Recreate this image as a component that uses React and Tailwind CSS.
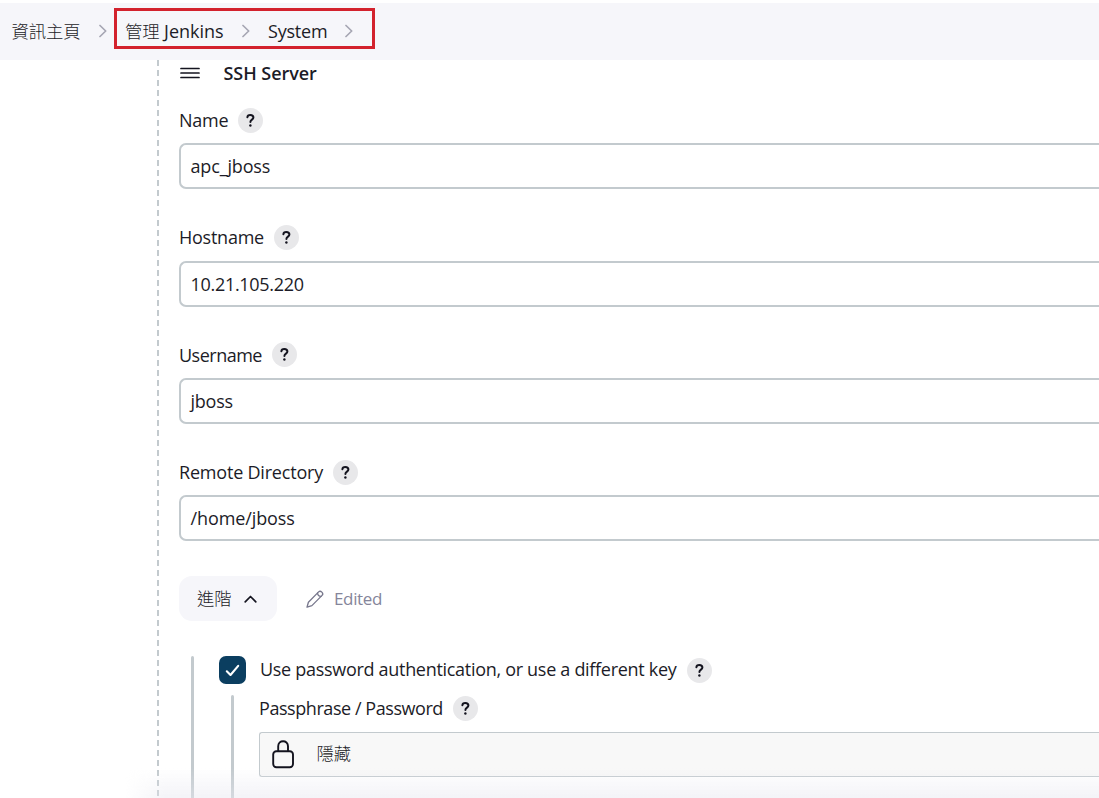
import React from "react";

function Help() {
  return (
    <span className="flex h-[25px] w-[25px] shrink-0 items-center justify-center rounded-full bg-[#e8e8ea]">
      <svg width="9" height="13" viewBox="0 0 9 13" fill="none" stroke="#14141f" strokeWidth="2" strokeLinecap="round" strokeLinejoin="round">
        <path d="M1.4 3.3C1.5 1.8 2.8 1.1 4.3 1.1C6 1.1 7.4 2 7.4 3.6C7.4 5.6 4.4 5.7 4.4 8" />
        <path d="M4.4 11.4V11.5" strokeWidth="2.4" />
      </svg>
    </span>
  );
}

function Separator({ className }) {
  return (
    <svg className={className} width="8" height="14" viewBox="0 0 8 14" fill="none" stroke="#a6a6b3" strokeWidth="1.7" strokeLinecap="round" strokeLinejoin="round">
      <path d="M1 1.5L6.7 7L1 12.5" />
    </svg>
  );
}

function Field({ label, labelClass, value, valueClass, className }) {
  return (
    <div className={`flex flex-col ${className}`}>
      <div className="flex h-[25px] items-center">
        <span className={`shrink-0 whitespace-nowrap ${labelClass}`}>{label}</span>
        <Help />
      </div>
      <div className="flex h-[46px] items-center rounded-l-[7px] border-2 border-r-0 border-[#c3cace] bg-white pl-[9.5px]">
        <span className={`whitespace-nowrap ${valueClass}`}>{value}</span>
      </div>
    </div>
  );
}

export default function App() {
  return (
    <div className="relative flex h-[798px] w-[1099px] flex-col overflow-hidden bg-white pt-[3px] font-['Open_Sans','Noto_Sans_CJK_TC',sans-serif] text-[18px] leading-[25px] text-[#1c1c27]">
      <header className="flex h-[57px] shrink-0 items-start bg-[#f6f6fa] pl-[11.5px]">
        <div className="flex h-[56px] items-center">
          <span className="w-[87.5px] text-[17.3px] font-light">資訊主頁</span>
          <Separator />
        </div>
        <div className="ml-[7px] mt-[5px] flex h-[41px] w-[261px] items-center border-[3px] border-[#d3222d] pl-[8px] pt-[5px]">
          <span className="w-[117px] whitespace-nowrap text-[17.3px] font-light">
            管理 <span className="text-[18px] font-normal tracking-[0px]">Jenkins</span>
          </span>
          <Separator />
          <span className="ml-[18px] w-[77px] tracking-[-0.2px]">System</span>
          <Separator />
        </div>
      </header>
      <main className="flex min-h-0 flex-1 pl-[157px]">
        <div className="w-[2px] shrink-0 bg-[repeating-linear-gradient(to_bottom,#c3cace_0px,#c3cace_6px,transparent_6px,transparent_10px)]" />
        <div className="flex flex-1 flex-col pl-[20px]">
          <div className="flex h-[26px] shrink-0 items-center">
            <svg width="22" height="14" viewBox="0 0 22 14" stroke="#14141f" strokeWidth="1.7" strokeLinecap="round">
              <path d="M2 2.5H20M2 7H20M2 11.5H20" />
            </svg>
            <span className="ml-[22.5px] font-semibold tracking-[-0.05px]">SSH Server</span>
          </div>
          <Field className="mt-[22px] gap-[10px]" label="Name" labelClass="w-[59px] tracking-[-0.25px]" value="apc_jboss" valueClass="tracking-[-0.15px]" />
          <Field className="mt-[36px] gap-[11px]" label="Hostname" labelClass="w-[95px] tracking-[-0.25px]" value="10.21.105.220" valueClass="tracking-[-0.3px]" />
          <Field className="mt-[35px] gap-[11px]" label="Username" labelClass="w-[93px] pt-px tracking-[-0.5px]" value="jboss" valueClass="tracking-[-0.25px]" />
          <Field className="mt-[36px] gap-[10px]" label="Remote Directory" labelClass="w-[154px] tracking-[-0.2px]" value="/home/jboss" valueClass="tracking-[-0.1px]" />
          <div className="mt-[35px] flex h-[45px] shrink-0 items-center">
            <button className="flex h-[45px] w-[98px] items-center rounded-[13px] bg-[#f6f6fa] pl-[18px]">
              <span className="w-[47px] text-left text-[17.3px] font-light">進階</span>
              <svg width="13" height="8" viewBox="0 0 13 8" fill="none" stroke="#14141f" strokeWidth="1.7" strokeLinecap="round" strokeLinejoin="round">
                <path d="M1.2 6.8L6.5 1.5L11.8 6.8" />
              </svg>
            </button>
            <svg className="ml-[28px]" width="20" height="20" viewBox="0 0 20 20" fill="none" stroke="#77778c" strokeWidth="1.3" strokeLinejoin="round" strokeLinecap="round">
              <path d="M2 18.2L3.4 13.3L13.6 2.9C15.6 0.9 19.1 4.4 17.1 6.4L6.9 16.6Z" />
              <path d="M12.6 3.9C12.4 5.9 14.1 7.6 16.1 7.4" />
            </svg>
            <span className="ml-[9px] text-[17px] tracking-[-0.35px] text-[#85859a]">Edited</span>
          </div>
          <div className="mt-[35px] flex min-h-0 flex-1 pl-[12px]">
            <div className="w-[3px] shrink-0 rounded-t-full bg-[#c3cace]" />
            <div className="flex flex-1 flex-col pl-[25px]">
              <div className="flex h-[28px] shrink-0 items-center">
                <span className="flex h-[28px] w-[27px] items-center justify-center rounded-[7px] bg-[#0b3e60]">
                  <svg width="15" height="13" viewBox="0 0 15 13" fill="none" stroke="#fff" strokeWidth="2.1" strokeLinecap="round" strokeLinejoin="round">
                    <path d="M1.8 7.3L5.5 11L13.2 1.8" />
                  </svg>
                </span>
                <span className="ml-[14px] w-[427px] whitespace-nowrap pb-[2px] tracking-[-0.3px]">Use password authentication, or use a different key</span>
                <Help />
              </div>
              <div className="mt-[11px] flex min-h-0 flex-1 pl-[12px]">
                <div className="w-[3px] shrink-0 rounded-t-full bg-[#c3cace]" />
                <div className="flex flex-1 flex-col pl-[25px]">
                  <div className="mt-px flex h-[25px] shrink-0 items-center">
                    <span className="w-[194px] whitespace-nowrap tracking-[-0.44px]">Passphrase / Password</span>
                    <Help />
                  </div>
                  <div className="mt-[11px] flex h-[45px] shrink-0 items-center rounded-l-[3px] border border-r-0 border-[#c3cace] bg-[#f8f8f8] pl-[12px]">
                    <svg width="23" height="29" viewBox="0 0 23 29" fill="none" stroke="#14141f" strokeWidth="1.9">
                      <rect x="1.2" y="11.3" width="19.8" height="16" rx="3.2" />
                      <path d="M6.2 11.3V6.2C6.2 -0.4 16 -0.4 16 6.2V11.3" />
                    </svg>
                    <span className="ml-[21.5px] pb-[2px] text-[17.3px] font-light">隱藏</span>
                  </div>
                </div>
              </div>
            </div>
          </div>
        </div>
      </main>
      <div className="pointer-events-none absolute bottom-0 left-[125px] right-0 h-[30px] bg-linear-to-b from-transparent to-[#e8e8f0]/50 [mask-image:linear-gradient(to_right,transparent,black_40px)]" />
    </div>
  );
}
